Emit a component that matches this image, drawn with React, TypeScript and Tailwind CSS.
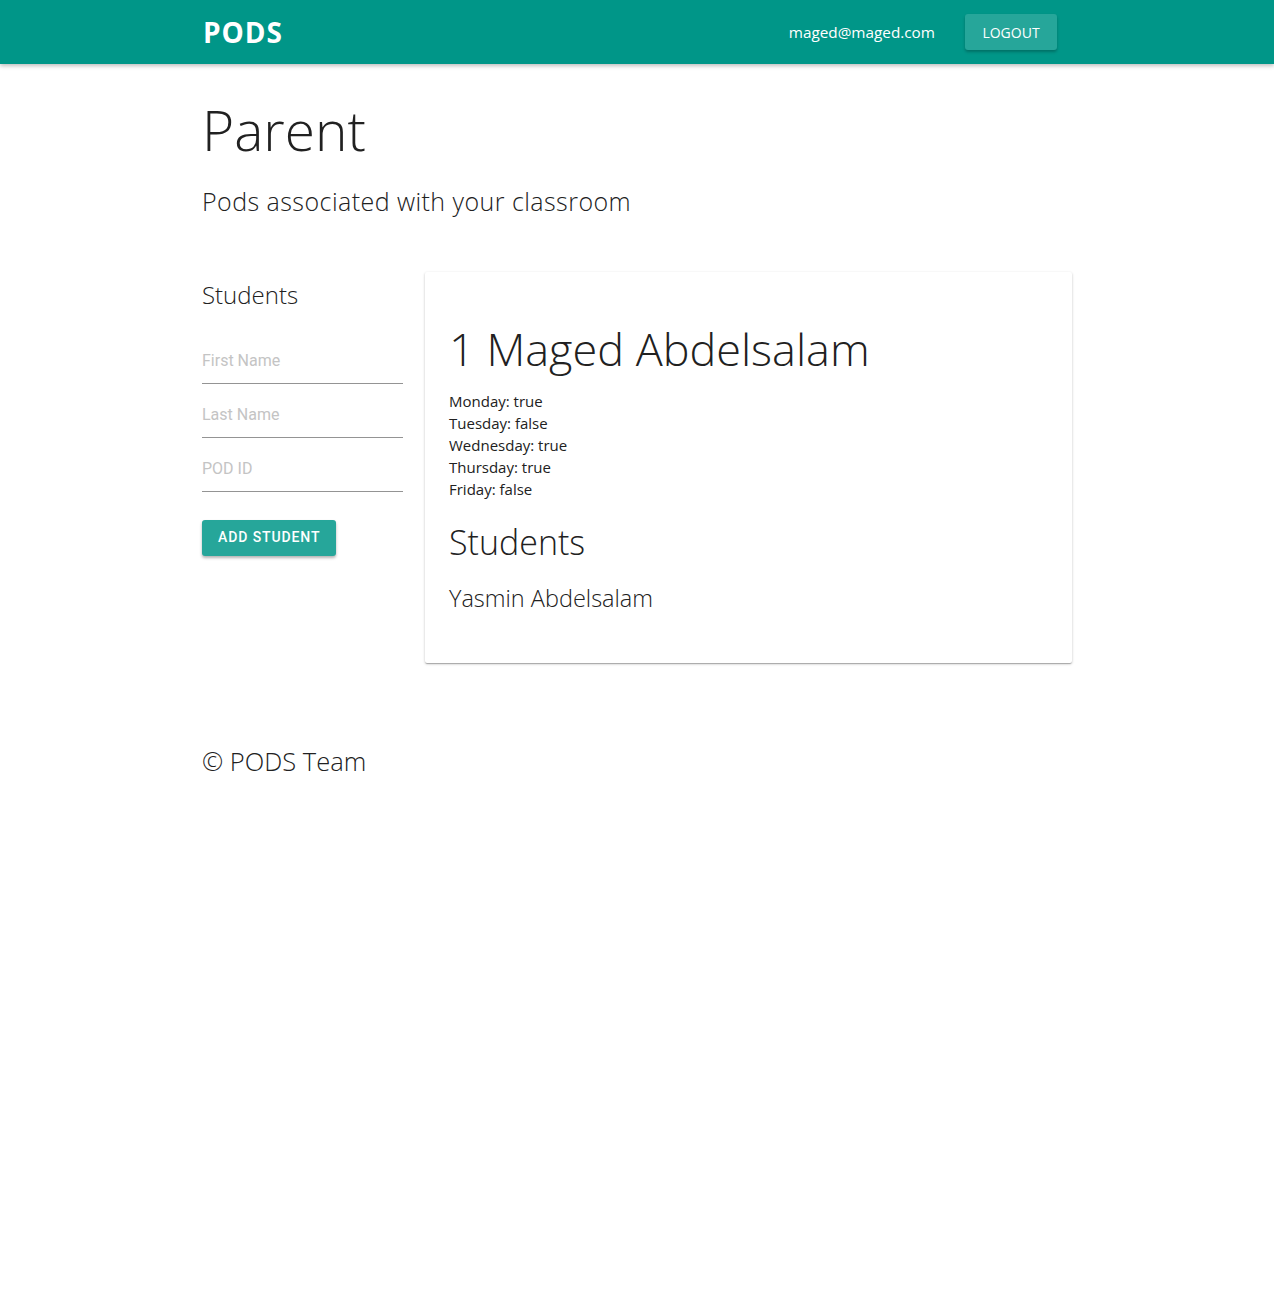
const font = "font-['Open_Sans','Noto_Sans',sans-serif]";

const days = [
  ["Monday", "true"],
  ["Tuesday", "false"],
  ["Wednesday", "true"],
  ["Thursday", "true"],
  ["Friday", "false"],
];

function Field({ label }: { label: string }) {
  return (
    <div className="border-b border-[#949494] pt-[14px] pb-[10px]">
      <input
        placeholder={label}
        className="w-full bg-transparent text-[16px] text-[#212121] outline-none placeholder:text-[#c4c4c4] font-['Roboto',sans-serif]"
      />
    </div>
  );
}

export default function App() {
  return (
    <div className={`min-h-screen bg-white text-[#212121] ${font}`}>
      <header className="h-16 bg-[#009688] shadow-[0_2px_4px_rgba(0,0,0,0.25)]">
        <div className="flex h-full items-center pl-[203px] pr-[217px]">
          <span className="text-[28px] font-bold tracking-[1px] text-white">
            PODS
          </span>
          <div className="ml-auto flex items-center gap-[30px]">
            <span className="text-[15.3px] text-white">
              maged@maged.com
            </span>
            <button className="h-9 w-[92px] rounded-[3px] bg-[#26a69a] text-[14px] text-white shadow-[0_2px_3px_rgba(0,0,0,0.25)]">
              LOGOUT
            </button>
          </div>
        </div>
      </header>

      <main className="pl-[202px] pr-[202px]">
        <h1 className="mt-[33px] text-[55px] font-light leading-[1.2]">
          Parent
        </h1>

        <p className="mt-[21px] text-[25px] font-light leading-[1.4] tracking-[0.45px]">
          Pods associated with your classroom
        </p>

        <div className="mt-[53px] flex gap-[22px]">
          <div className="w-[201px] shrink-0">
            <h3 className="mt-[6px] text-[24px] font-light leading-[1.4]">
              Students
            </h3>

            <div className="mt-[22px] flex flex-col gap-[4px]">
              <Field label="First Name" />
              <Field label="Last Name" />
              <Field label="POD ID" />
            </div>

            <button className="mt-[28px] h-9 rounded-[3px] bg-[#26a69a] px-4 text-[14px] font-medium tracking-[0.9px] text-white shadow-[0_2px_3px_rgba(0,0,0,0.3)] font-['Roboto',sans-serif]">
              ADD STUDENT
            </button>
          </div>

          <div className="h-[391px] flex-1 rounded-[2px] bg-white px-6 pt-[51px] shadow-[0_1px_3px_rgba(0,0,0,0.2),0_1px_1px_rgba(0,0,0,0.14),0_2px_1px_-1px_rgba(0,0,0,0.12)]">
            <h2 className="text-[45px] font-light leading-[1.167]">
              1 Maged Abdelsalam
            </h2>

            <div className="mt-[14px] text-[15px] leading-[22px]">
              {days.map(([day, value]) => (
                <div key={day}>
                  {day}: {value}
                </div>
              ))}
            </div>

            <h3 className="mt-[21px] text-[34px] font-light leading-[1.235]">
              Students
            </h3>

            <p className="mt-[21px] text-[23.5px] font-light leading-[1.334]">
              Yasmin Abdelsalam
            </p>
          </div>
        </div>

        <footer className="mt-[81px] text-[25.5px] font-light leading-[1.4]">
          © PODS Team
        </footer>
      </main>
    </div>
  );
}
